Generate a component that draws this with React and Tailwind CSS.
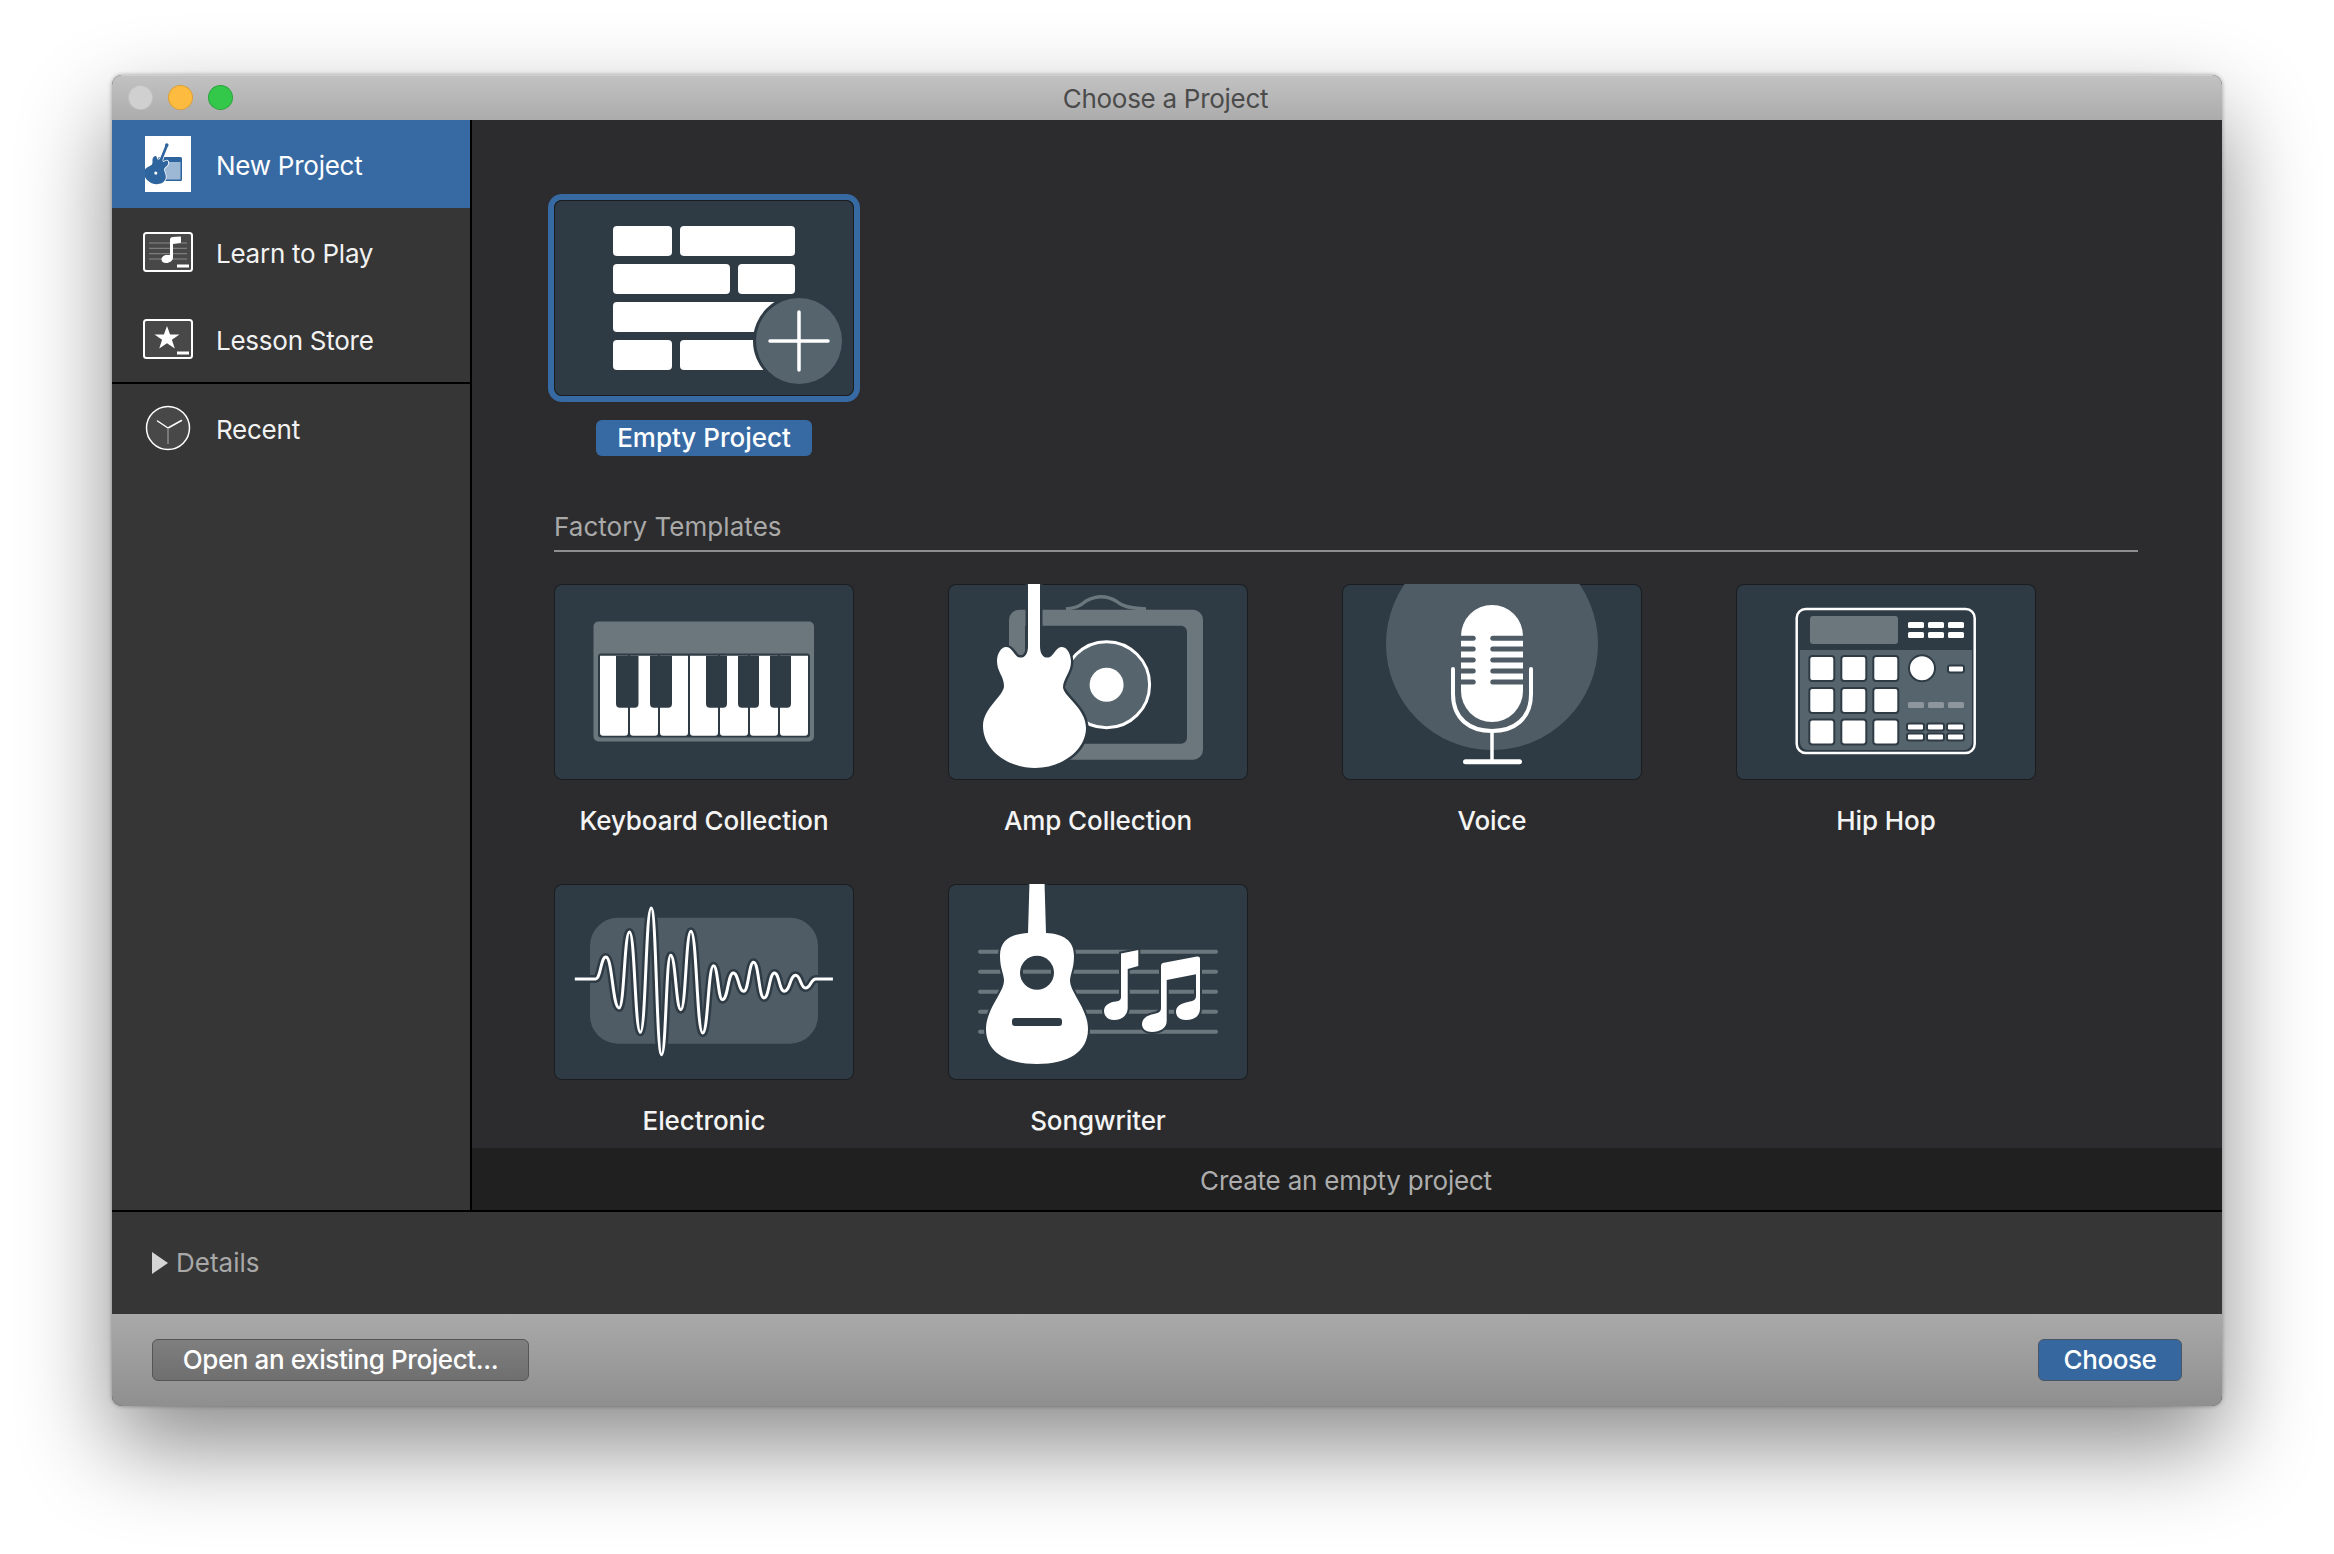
const TILE = "#2e3b45";
const GREY = "#6c777d";
const MID = "#56646e";
const SOFT = "#4f5c65";
const GUITAR = "M80 -2H92V62C92 72 97 75 102 73C106 71 108 63 114 63C120 63 123 72 123 78C123 88 115 95 115 103C115 112 138 124 138 144C138 166 114 184 87 184C60 184 35 166 35 142C35 124 56 112 56 102C56 92 49 88 49 77C49 70 53 63 58 63C64 63 66 71 70 73C75 75 80 72 80 62Z";

function Tile({ children, selected }) {
  return (
    <div className={"h-[196px] w-[300px] overflow-hidden rounded-[8px] bg-[#2e3b45] shadow-[inset_0_0_0_1px_#1a1c1f] " + (selected ? "ring-[6px] ring-[#376aa3]" : "")}>
      <svg width="300" height="196" viewBox="0 0 300 196" className="block">{children}</svg>
    </div>
  );
}

function EmptyIcon() {
  const bricks = [[59,26,59],[126,26,115],[59,64,117],[184,64,57],[59,102,182],[59,140,59],[126,140,115]];
  return (
    <>
      {bricks.map(([x,y,w],i)=><rect key={i} x={x} y={y} width={w} height="30" rx="4" fill="#fff"/>)}
      <circle cx="245" cy="141" r="46" fill={TILE}/>
      <circle cx="245" cy="141" r="43" fill={MID}/>
      <path d="M245 112v58M216 141h58" stroke="#fff" strokeWidth="3.5" strokeLinecap="round"/>
    </>
  );
}

function KeyboardIcon() {
  const whites = [46,76,106,136,166,196,226];
  const blacks = [[62,22.5],[96,22],[152,21],[184,21],[216,21]];
  return (
    <>
      <rect x="39.5" y="37.5" width="220.5" height="120" rx="5" fill={GREY}/>
      <rect x="44" y="69.5" width="212" height="84" rx="3" fill={TILE}/>
      {whites.map(x=><path key={x} d={`M${x} 71.7h28v77a3 3 0 0 1-3 3h-22a3 3 0 0 1-3-3z`} fill="#fff"/>)}
      {blacks.map(([x,w])=><path key={x} d={`M${x} 71.7h${w}v48a4 4 0 0 1-4 4h-${w-8}a4 4 0 0 1-4-4z`} fill={TILE}/>)}
    </>
  );
}

function AmpIcon() {
  return (
    <>
      <path d="M118 25C128 24 132 22 138 17C149 11 158 11 168 17C174 22 180 24 198 25" fill="none" stroke={GREY} strokeWidth="3.5"/>
      <path fillRule="evenodd" d="M71 25.7H245a10 10 0 0 1 10 10V165.7a10 10 0 0 1-10 10H71a10 10 0 0 1-10-10V35.7a10 10 0 0 1 10-10zM77 41.7V159.7H233a6 6 0 0 0 6-6V47.7a6 6 0 0 0-6-6z" fill={GREY}/>
      <circle cx="158.6" cy="100.7" r="43" fill={MID} stroke="#fff" strokeWidth="3"/>
      <circle cx="158.6" cy="100.7" r="17" fill="#fff"/>
      <path d={GUITAR} fill="#fff" stroke={TILE} strokeWidth="5" style={{paintOrder:"stroke"}}/>
    </>
  );
}

function VoiceIcon() {
  const rows = [54.3,65,76,87,98];
  return (
    <>
      <circle cx="150" cy="60" r="106" fill={SOFT}/>
      <rect x="119" y="21" width="62" height="117" rx="31" fill="#fff"/>
      {rows.map(y=><g key={y} fill={SOFT}>
        <path d={`M117 ${y-2.5}h14.2a2.5 2.5 0 0 1 0 5H117z`}/>
        <path d={`M183 ${y-2.5}h-32.2a2.5 2.5 0 0 0 0 5H183z`}/>
      </g>)}
      <path d="M111 85V110C111 135 128 147 150 147C172 147 189 135 189 110V85" fill="none" stroke="#fff" strokeWidth="4" strokeLinecap="round"/>
      <path d="M150 147V176" stroke="#fff" strokeWidth="3.5"/>
      <rect x="121" y="175.3" width="59" height="5" rx="2.5" fill="#fff"/>
    </>
  );
}

function HipHopIcon() {
  const cols = [172,192,212];
  const pads = [73.3,105.3,137.3];
  const padY = [72,104,135.5];
  return (
    <>
      <path d="M64 66H236V158a8 8 0 0 1-8 8H72a8 8 0 0 1-8-8z" fill={MID}/>
      <rect x="60.7" y="25" width="178" height="144" rx="9" fill="none" stroke="#fff" strokeWidth="2.5"/>
      <rect x="74" y="32" width="88" height="28" rx="3" fill={GREY}/>
      {cols.map(x=><g key={x} fill="#fff"><rect x={x} y="38" width="16" height="6" rx="1.5"/><rect x={x} y="48" width="16" height="6" rx="1.5"/></g>)}
      {padY.map(y=>pads.map(x=><rect key={x+"-"+y} x={x} y={y} width="25" height="25" rx="3" fill="#fff" stroke={TILE} strokeWidth="2"/>))}
      <circle cx="186" cy="84.3" r="13" fill="#fff" stroke={TILE} strokeWidth="2"/>
      <rect x="212" y="81.5" width="16" height="7" rx="2" fill="#fff" stroke={TILE} strokeWidth="2"/>
      {cols.map(x=><rect key={x} x={x} y="118" width="16" height="6" rx="1.5" fill="#8d969c"/>)}
      {cols.map(x=><g key={x} fill="#fff" stroke={TILE} strokeWidth="2"><rect x={x-1} y="139.5" width="17" height="7" rx="2"/><rect x={x-1} y="149.5" width="17" height="7" rx="2"/></g>)}
    </>
  );
}

const WAVE = [[74,328],[118,328],[140,262],[168,415],[190,187],[213,488],[236,115],[258,555],[277,257],[299,420],[320,185],[345,490],[368,288],[387,390],[410,310],[432,365],[453,278],[475,385],[497,310],[518,365],[542,317],[563,355],[585,328],[621,328]]
  .map(([x,y])=>[(x-30)/2.119,(y-43)/3]);
function wavePath() {
  let d = `M${WAVE[0][0].toFixed(1)} ${WAVE[0][1].toFixed(1)}`;
  for (let i=1;i<WAVE.length;i++){
    const [x0,y0]=WAVE[i-1]; const [x1,y1]=WAVE[i]; const m=(x0+x1)/2;
    d+=` C${m.toFixed(1)} ${y0.toFixed(1)} ${m.toFixed(1)} ${y1.toFixed(1)} ${x1.toFixed(1)} ${y1.toFixed(1)}`;
  }
  return d;
}
function ElectronicIcon() {
  const d = wavePath();
  return (
    <>
      <rect x="36" y="33.7" width="228" height="126" rx="28" fill={SOFT}/>
      <path d={d} fill="none" stroke={TILE} strokeWidth="8"/>
      <path d={d} fill="none" stroke="#fff" strokeWidth="3"/>
    </>
  );
}

function SongwriterIcon() {
  const lines = [67.7,87.7,107.7,127.7,147.7];
  return (
    <>
      {lines.map(y=><rect key={y} x="30" y={y-2} width="240" height="4" rx="2" fill={GREY}/>)}
      <path d="M81.5 -2H96.5L98 49C115 50 126 56 126 72C126 85 122 90 122 97C122 108 140 125 140 145C140 168 120 180 89 180C58 180 38 168 38 145C38 125 56 108 56 97C56 90 52 85 52 72C52 56 63 50 80 49Z" fill="#fff" stroke={TILE} strokeWidth="4" style={{paintOrder:"stroke"}}/>
      <circle cx="89" cy="88.7" r="17" fill={TILE}/>
      <rect x="75" y="85.7" width="28" height="4" fill={GREY}/>
      <rect x="64" y="134" width="50" height="8" rx="3" fill={TILE}/>
      <path d="M173 69.5L190.3 66V82L179.7 85V124C179.7 131 174 136 166 136C160 136 156 132 156 127C156 121 162 118 168 117.5C171 117 173 116 173 113Z" fill="#fff" stroke={TILE} strokeWidth="4" style={{paintOrder:"stroke"}}/>
      <path d="M213 82C213 80 214 79 216 78.7L249 72.5C251 72.3 252 73 252 75V125C252 132 246 136 238 136C232 136 228 133 228 127.5C228 122 234 119 240 118C245 117 248 116 248 112V90.3L218.7 96V137C218.7 144 212 148 204 148C198 148 194 145 194 140C194 134 200 131 206 130C210 129 213 128 213 124Z" fill="#fff" stroke={TILE} strokeWidth="4" style={{paintOrder:"stroke"}}/>
    </>
  );
}

function NewProjectIcon() {
  return (
    <svg width="46" height="56" viewBox="0 0 46 56" className="block">
      <rect width="46" height="56" fill="#fff"/>
      <rect x="13" y="21" width="24" height="24" rx="1.5" fill="#2f659f"/>
      <rect x="14.500" y="26" width="21" height="17.500" fill="#9db8d5"/>
      <g transform="translate(14.500 28) rotate(22) scale(0.22) translate(-87 -90)">
        <path d={GUITAR} fill="#2f659f" stroke="#fff" strokeWidth="7" style={{paintOrder:"stroke"}}/>
        <circle cx="87" cy="135" r="7" fill="#fff"/>
      </g>
      <circle cx="21.800" cy="9" r="1.800" fill="#2f659f"/>
    </svg>
  );
}

function LearnIcon() {
  return (
    <svg width="50" height="40" viewBox="0 0 50 40" className="block">
      <rect x="1" y="1" width="48" height="38" rx="2.500" fill="#484848" stroke="#fff" strokeWidth="2"/>
      {[11,16.3,21.7,27].map(y=><path key={y} d={`M6 ${y}H44`} stroke="#8a8a8a" strokeWidth="1"/>)}
      <path d="M27 7.500C27 6 28 5.300 30 5L37 4.500C38 4.400 38 5 38 6V9.500C38 10.500 37.500 11 36.500 11L30 12V25.500C30 28.500 27 31 23 31C20 31 18.500 29.500 18.500 27.500C18.500 25 21 23 24 23H27Z" fill="#fff"/>
      <rect x="34" y="32.500" width="12" height="3" fill="#fff"/>
    </svg>
  );
}

function StoreIcon() {
  return (
    <svg width="50" height="40" viewBox="0 0 50 40" className="block">
      <rect x="1" y="1" width="48" height="38" rx="2.500" fill="#484848" stroke="#fff" strokeWidth="2"/>
      <path d="M24 7L27.100 15.500H36.500L28.900 20.800L31.800 29.500L24 24.200L16.200 29.500L19.100 20.800L11.500 15.500H20.900Z" fill="#fff"/>
      <rect x="34" y="32.500" width="12" height="3" fill="#fff"/>
    </svg>
  );
}

function RecentIcon() {
  return (
    <svg width="46" height="46" viewBox="0 0 46 46" className="block">
      <circle cx="23" cy="23" r="21.500" fill="#484848" stroke="#fff" strokeWidth="1.500"/>
      <path d="M23 23L12.500 16M23 23L36.500 15.500" stroke="#fff" strokeWidth="1.500" strokeLinecap="round"/>
      <path d="M23 23V39" stroke="#8a8a8a" strokeWidth="1.500"/>
    </svg>
  );
}

function SideItem({ icon, label, active, divider, iconOffset }) {
  return (
    <div className={"flex h-[88px] items-center pl-[20px] text-[26px] tracking-[-0.25px] text-[#f2f2f2] " + (active ? "bg-[#376aa3] text-white " : "") + (divider ? "border-b-2 border-black" : "")}>
      <div className="flex w-[84px] justify-start">
        <div className={iconOffset}>{icon}</div>
      </div>
      <span className="mt-[2px]">{label}</span>
    </div>
  );
}

function Item({ name, icon }) {
  return (
    <div className="flex h-[300px] w-[300px] flex-col items-center">
      <Tile>{icon}</Tile>
      <div className="mt-[21px] h-[40px] text-center text-[26px] font-medium leading-[40px] tracking-[-0.1px] text-[#f4f4f4]">{name}</div>
    </div>
  );
}

export default function App() {
  return (
    <div className="h-[1554px] w-[2334px] overflow-hidden bg-white pl-[112px] pt-[75px] [font-family:Inter,sans-serif]">
      <div className="flex h-[1331px] w-[2110px] flex-col overflow-hidden rounded-[10px] bg-[#363636] shadow-[0_40px_92px_rgba(0,0,0,0.46),0_0_4px_rgba(0,0,0,0.35)]">
        <div className="relative flex h-[45px] shrink-0 items-center justify-center border-t border-[#cfcfcf] bg-gradient-to-b from-[#c2c2c2] to-[#acacac] pr-[3px]">
          <div className="absolute left-[17px] top-[10px] flex items-center gap-[17px]">
            <span className="h-[23px] w-[23px] rounded-full bg-[#d0d0d0] ring-1 ring-[#c0c0c0]"></span>
            <span className="h-[23px] w-[23px] rounded-full bg-[#fdbc40] ring-1 ring-[#dea034]"></span>
            <span className="h-[23px] w-[23px] rounded-full bg-[#34c84a] ring-1 ring-[#2aa43c]"></span>
          </div>
          <span className="text-[26px] tracking-[-0.28px] text-[#4b4b4b]">Choose a Project</span>
        </div>

        <div className="flex h-[1090px] shrink-0">
          <div className="w-[360px] shrink-0 border-r-2 border-black bg-[#363636]">
            <SideItem iconOffset="ml-[13px]" active icon={<NewProjectIcon />} label="New Project" />
            <SideItem iconOffset="ml-[11px]" icon={<LearnIcon />} label="Learn to Play" />
            <SideItem iconOffset="ml-[11px]" divider icon={<StoreIcon />} label="Lesson Store" />
            <SideItem iconOffset="ml-[13px]" icon={<RecentIcon />} label="Recent" />
          </div>

          <div className="flex min-w-0 flex-1 flex-col bg-[#2c2c2e]">
            <div className="min-h-0 flex-1 overflow-hidden pl-[82px] pr-[84px] pt-[80px]">
              <div className="flex w-[300px] flex-col items-center">
                <Tile selected><EmptyIcon /></Tile>
                <div className="mt-[24px] flex h-[36px] w-[216px] items-center justify-center rounded-[6px] bg-[#376aa3] pb-[2px] text-[26px] font-medium text-white">Empty Project</div>
              </div>
              <div className="mt-[52px] border-b-2 border-[#8e8e8e] pb-[4px] text-[26px] leading-[38px] tracking-[0.05px] text-[#a9a9a9]">Factory Templates</div>
              <div className="mt-[32px] grid grid-cols-[repeat(4,300px)] gap-x-[94px]">
                <Item name="Keyboard Collection" icon={<KeyboardIcon />} />
                <Item name="Amp Collection" icon={<AmpIcon />} />
                <Item name="Voice" icon={<VoiceIcon />} />
                <Item name="Hip Hop" icon={<HipHopIcon />} />
                <Item name="Electronic" icon={<ElectronicIcon />} />
                <Item name="Songwriter" icon={<SongwriterIcon />} />
              </div>
            </div>
            <div className="flex h-[62px] shrink-0 items-center justify-center bg-[#202020] pr-[2px] pt-[2px] text-[26px] tracking-[-0.22px] text-[#adadad]">Create an empty project</div>
          </div>
        </div>

        <div className="flex h-[104px] shrink-0 items-center border-t-2 border-black bg-[#363636] pl-[40px]">
          <svg width="16" height="22" viewBox="0 0 16 22" className="block"><path d="M0 0L16 11L0 22Z" fill="#d4d4d4"/></svg>
          <span className="mb-[2px] ml-[8px] text-[26px] text-[#a8a8a8]">Details</span>
        </div>

        <div className="flex h-[92px] shrink-0 items-center justify-between bg-gradient-to-b from-[#a9a9a9] to-[#8f8f8f] pl-[40px] pr-[40px]">
          <button className="flex h-[42px] w-[377px] items-center justify-center rounded-[6px] border border-[#555] bg-gradient-to-b from-[#7f7f7f] to-[#6f6f6f] pb-[2px] text-[26px] font-medium tracking-[-0.4px] text-white">Open an existing Project...</button>
          <button className="flex h-[42px] w-[144px] items-center justify-center rounded-[6px] border border-[#4a5563] bg-[#36689f] pb-[2px] text-[26px] font-medium tracking-[-0.4px] text-white">Choose</button>
        </div>
      </div>
    </div>
  );
}
